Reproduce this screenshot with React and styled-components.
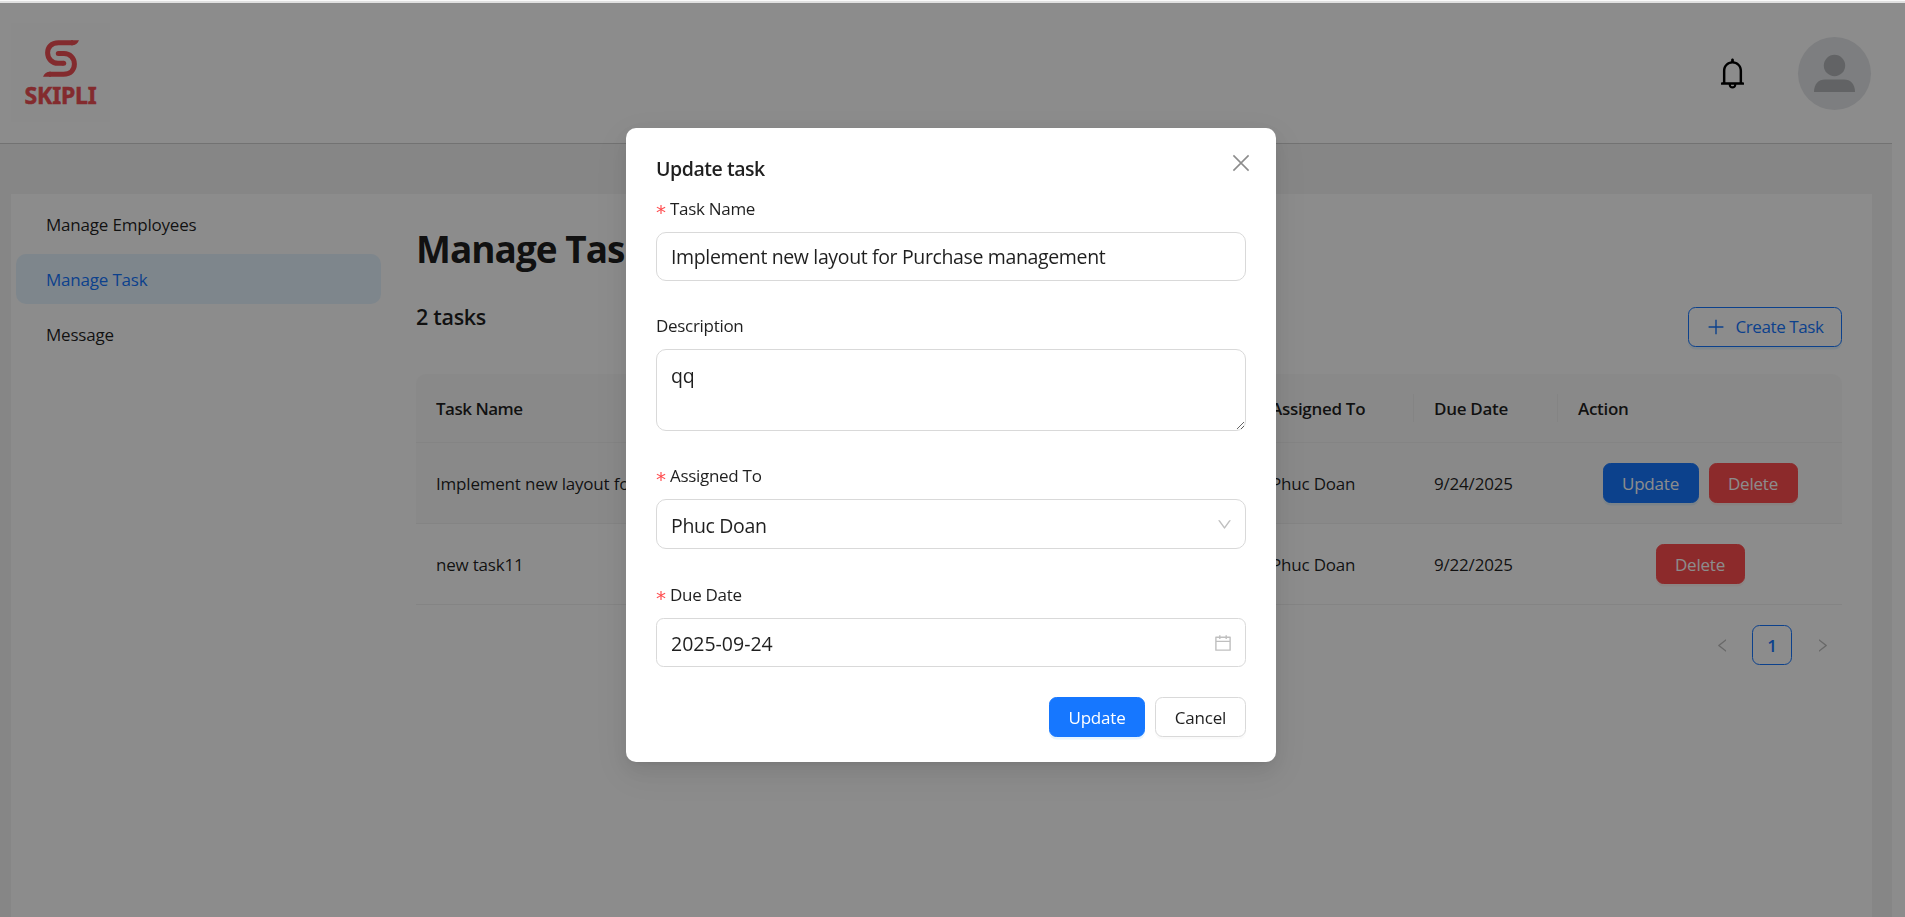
import React from "react";
import styled, { createGlobalStyle } from "styled-components";
import {
  AiOutlineBell,
  AiOutlineCalendar,
  AiOutlineDown,
  AiOutlineLeft,
  AiOutlineRight,
} from "react-icons/ai";

const GlobalStyle = createGlobalStyle`
  * { box-sizing: border-box; }
  html, body { margin: 0; height: 917px; overflow: hidden; }
  body {
    background: #fff;
    color: rgba(0, 0, 0, 0.88);
    font-family: "Open Sans", "Noto Sans", sans-serif;
    font-size: 17px;
    letter-spacing: -0.2px;
    line-height: 28px;
  }
  button, input, textarea { font: inherit; letter-spacing: inherit; color: inherit; }
`;

const TopEdge = styled.div`
  height: 3px;
  background: #e0e0e0;
  border-top: 1px solid #f9f9f9;
`;

const Page = styled.div`
  width: 1892px;
  height: 914px;
  display: flex;
  flex-direction: column;
`;

const Header = styled.header`
  height: 141px;
  flex: none;
  display: flex;
  align-items: center;
  justify-content: space-between;
  padding: 0 21px 1px 11px;
  border-bottom: 1px solid #d0d0d0;
`;

const LogoBox = styled.div`
  width: 99px;
  height: 99px;
  margin-top: -1px;
  background: #fdfdfd;
  color: #ee4f54;
  display: flex;
  flex-direction: column;
  align-items: center;
  padding-top: 17px;
`;

const LogoText = styled.div`
  font: 700 23px/24px "Noto Sans", sans-serif;
  -webkit-text-stroke: 0.5px currentColor;
  margin-top: 6px;
`;

const HeaderActions = styled.div`
  display: flex;
  align-items: center;
  gap: 48px;
  margin-top: 2px;
  color: #000;
`;

const Avatar = styled.div`
  width: 73px;
  height: 73px;
  border-radius: 50%;
  background: #e4e6e9;
  overflow: hidden;
`;

const Body = styled.div`
  flex: 1;
  background: #f5f5f5;
  padding: 50px 20px 0 11px;
`;

const Card = styled.main`
  height: 100%;
  background: #fff;
  display: flex;
`;

const Sidebar = styled.nav`
  width: 375px;
  padding: 5px;
  display: flex;
  flex-direction: column;
  gap: 5px;
`;

const MenuItem = styled.a`
  height: 50px;
  line-height: 51px;
  padding-left: 30px;
  border-radius: 10px;
  background: ${(p) => (p.$active ? "#e6f4ff" : "transparent")};
  color: ${(p) => (p.$active ? "#1677ff" : "inherit")};
`;

const Content = styled.section`
  flex: 1;
  padding: 29px 30px 0;
`;

const PageTitle = styled.h1`
  margin: 0;
  font-size: 37px;
  line-height: 51px;
  height: 50px;
  font-weight: 700;
  letter-spacing: -1px;
`;

const Toolbar = styled.div`
  display: flex;
  justify-content: space-between;
  align-items: flex-end;
  height: 74px;
  margin-bottom: 27px;
`;

const Count = styled.h3`
  margin: 0;
  align-self: flex-start;
  padding-top: 29px;
  font-size: 21.5px;
  line-height: 30px;
  font-weight: 600;
  letter-spacing: -0.3px;
`;

const variants = {
  primary: "background:#1677ff;color:#fff;border-color:#1677ff;box-shadow:0 2.5px 0 rgba(5,145,255,.1);",
  danger: "background:#ff4d4f;color:#fff;border-color:#ff4d4f;box-shadow:0 2.5px 0 rgba(255,38,5,.06);",
  outline: "background:#fff;color:#1677ff;border-color:#1677ff;box-shadow:0 2.5px 0 rgba(5,145,255,.1);",
  plain: "background:#fff;border-color:#d9d9d9;box-shadow:0 2.5px 0 rgba(0,0,0,.02);",
};

const Button = styled.button`
  width: ${(p) => p.$width}px;
  height: 40px;
  padding: ${(p) => (p.$variant === "outline" ? "0 0 0 2px" : "2px 0 0")};
  display: inline-flex;
  align-items: center;
  justify-content: center;
  gap: 11px;
  border: 1px solid;
  border-radius: 7.5px;
  ${(p) => variants[p.$variant]}
`;

const CreateLabel = styled.span`
  letter-spacing: -0.4px;
`;

const Table = styled.table`
  width: 1426px;
  table-layout: fixed;
  border-collapse: separate;
  border-spacing: 0;
`;

const HeadCell = styled.th`
  height: 69px;
  width: ${(p) => p.$width}px;
  padding: 0;
  text-align: left;
  font-weight: 600;
  letter-spacing: -0.3px;
  background: #fafafa;
  border-bottom: 1px solid #f0f0f0;
  &:first-child { border-top-left-radius: 10px; letter-spacing: -0.5px; }
  &:last-child { border-top-right-radius: 10px; }
`;

const HeadLabel = styled.div`
  height: 28px;
  line-height: 30px;
  padding-left: 20px;
  border-right: ${(p) => (p.$last ? "0" : "1px solid #f0f0f0")};
`;

const Row = styled.tr`
  background: ${(p) => (p.$hover ? "#fafafa" : "#fff")};
`;

const Cell = styled.td`
  height: 81px;
  padding: ${(p) => (p.$flush ? 0 : 2)}px 20px 0;
  border-bottom: 1px solid #f0f0f0;
  white-space: nowrap;
`;

const RowActions = styled.div`
  display: flex;
  justify-content: center;
  gap: 10px;
`;

const Pagination = styled.div`
  display: flex;
  justify-content: flex-end;
  gap: 10px;
  margin-top: 20px;
`;

const PageButton = styled.span`
  width: 40px;
  height: 40px;
  padding-top: ${(p) => (p.$current ? 2 : 1)}px;
  display: flex;
  align-items: center;
  justify-content: center;
  border-radius: 7.5px;
  font-weight: 600;
  border: 1px solid ${(p) => (p.$current ? "#1677ff" : "transparent")};
  color: ${(p) => (p.$current ? "#1677ff" : "rgba(0,0,0,0.25)")};
`;

const Mask = styled.div`
  position: fixed;
  inset: 3px 0 0 0;
  background: rgba(0, 0, 0, 0.45);
  display: flex;
  justify-content: center;
  align-items: flex-start;
  padding: 125px 3px 0 0;
`;

const Modal = styled.div`
  width: 650px;
  height: 634px;
  background: #fff;
  border-radius: 10px;
  padding: 25px 30px;
  box-shadow: 0 7.5px 20px 0 rgba(0, 0, 0, 0.08), 0 4px 7.5px -5px rgba(0, 0, 0, 0.12),
    0 11px 35px 10px rgba(0, 0, 0, 0.05);
`;

const ModalHead = styled.div`
  display: flex;
  justify-content: space-between;
  height: 42px;
`;

const ModalTitle = styled.h2`
  margin: 0;
  font-size: 19.5px;
  line-height: 31px;
  font-weight: 600;
  letter-spacing: -0.45px;
`;

const CloseButton = styled.button`
  width: 20px;
  height: 20px;
  margin-right: -5px;
  padding: 0;
  border: 0;
  background: none;
  color: rgba(0, 0, 0, 0.45);
  display: flex;
`;

const Field = styled.div`
  margin-bottom: ${(p) => p.$gap}px;
`;

const Label = styled.label`
  display: flex;
  gap: 5px;
  height: 28px;
  margin-bottom: 9px;
  align-items: center;
  letter-spacing: -0.3px;
`;

const Required = styled.span`
  width: 9px;
  height: 20px;
  padding-top: 3px;
  color: #ff4d4f;
  font: 20px/20px "DejaVu Sans", sans-serif;
  letter-spacing: 0;
`;

const ControlBox = styled.div`
  height: ${(p) => p.$height}px;
  padding: ${(p) => p.$top || 0}px 12px 0 14px;
  border: 1px solid #d9d9d9;
  border-radius: ${(p) => p.$radius || 10}px;
  display: flex;
  align-items: center;
  justify-content: space-between;
  font-size: 19.5px;
  letter-spacing: ${(p) => p.$spacing || 0}px;
  svg { color: rgba(0, 0, 0, 0.25); flex: none; margin-top: -${(p) => p.$top || 0}px; }
`;

const TextArea = styled.textarea`
  display: block;
  width: 100%;
  height: 82px;
  margin: 0;
  padding: 12px 14px;
  border: 1px solid #d9d9d9;
  border-radius: 10px;
  outline: 0;
  resize: vertical;
  font-size: 19.5px;
  line-height: 28px;
`;

const Footer = styled.div`
  display: flex;
  justify-content: flex-end;
  gap: 10px;
`;

const LogoMark = () => (
  <svg width="36" height="37" viewBox="0 0 36 37" fill="none" stroke="currentColor" strokeWidth="5">
    <path d="M30 2.7H15.5C8.2 2.7 4.6 7.4 4.6 12.8c0 6.2 4.6 10.5 10.4 10.5h5.5" />
    <path d="M6 34.2h14.5c7.3 0 10.9-4.7 10.9-10.1 0-6.2-4.6-10.5-10.4-10.5h-5.5" />
    <path d="M28 .2h8c-1.5 3.2-3.5 5-7 5h-1zM8 36.7H0c1.5-3.2 3.500-5 7-5h1z" fill="currentColor" stroke="none" />
    <circle cx="15.3" cy="13.6" r="2.5" fill="currentColor" stroke="none" />
    <circle cx="20.7" cy="23.3" r="2.5" fill="currentColor" stroke="none" />
  </svg>
);

const PersonIcon = () => (
  <svg width="73" height="73" viewBox="0 0 73 73" fill="#b2b5b8">
    <circle cx="36.5" cy="28.5" r="10.7" />
    <path d="M16 55c0-8 4.500-12.500 11-12.500h19c6.500 0 11 4.500 11 12.500z" />
  </svg>
);

const CloseIcon = () => (
  <svg width="20" height="20" viewBox="0 0 20 20" stroke="currentColor" strokeWidth="1.6">
    <path d="M2.400 2.400l15.200 15.200M17.600 2.400L2.400 17.600" />
  </svg>
);

const PlusIcon = () => (
  <svg width="16" height="16" viewBox="0 0 16 16" stroke="currentColor" strokeWidth="1.4">
    <path d="M8 .8v14.400M.6 8h14.800" />
  </svg>
);

const menu = ["Manage Employees", "Manage Task", "Message"];
const columns = [
  ["Task Name", 400],
  ["Description", 435],
  ["Assigned To", 163],
  ["Due Date", 144],
  ["Action", 284],
];
const tasks = [
  { name: "Implement new layout for Purchase management", description: "qq", due: "9/24/2025", editable: true },
  { name: "new task11", description: "", due: "9/22/2025", editable: false },
];

export default function App() {
  return (
    <>
      <GlobalStyle />
      <TopEdge />
      <Page>
        <Header>
          <LogoBox>
            <LogoMark />
            <LogoText>SKIPLI</LogoText>
          </LogoBox>
          <HeaderActions>
            <AiOutlineBell size={35} />
            <Avatar>
              <PersonIcon />
            </Avatar>
          </HeaderActions>
        </Header>
        <Body>
          <Card>
            <Sidebar>
              {menu.map((item) => (
                <MenuItem key={item} $active={item === "Manage Task"}>
                  {item}
                </MenuItem>
              ))}
            </Sidebar>
            <Content>
              <PageTitle>Manage Task</PageTitle>
              <Toolbar>
                <Count>2 tasks</Count>
                <Button $variant="outline" $width={154}>
                  <PlusIcon />
                  <CreateLabel>Create Task</CreateLabel>
                </Button>
              </Toolbar>
              <Table>
                <thead>
                  <tr>
                    {columns.map(([name, width], i) => (
                      <HeadCell key={name} $width={width}>
                        <HeadLabel $last={i === columns.length - 1}>{name}</HeadLabel>
                      </HeadCell>
                    ))}
                  </tr>
                </thead>
                <tbody>
                  {tasks.map((t) => (
                    <Row key={t.name} $hover={t.editable}>
                      <Cell>{t.name}</Cell>
                      <Cell>{t.description}</Cell>
                      <Cell>Phuc Doan</Cell>
                      <Cell>{t.due}</Cell>
                      <Cell $flush>
                        <RowActions>
                          {t.editable && (
                            <Button $variant="primary" $width={96}>
                              Update
                            </Button>
                          )}
                          <Button $variant="danger" $width={89}>
                            Delete
                          </Button>
                        </RowActions>
                      </Cell>
                    </Row>
                  ))}
                </tbody>
              </Table>
              <Pagination>
                <PageButton>
                  <AiOutlineLeft size={17} />
                </PageButton>
                <PageButton $current>1</PageButton>
                <PageButton>
                  <AiOutlineRight size={17} />
                </PageButton>
              </Pagination>
            </Content>
          </Card>
        </Body>
      </Page>
      <Mask>
        <Modal role="dialog">
          <ModalHead>
            <ModalTitle>Update task</ModalTitle>
            <CloseButton aria-label="Close">
              <CloseIcon />
            </CloseButton>
          </ModalHead>
          <Field $gap={31}>
            <Label>
              <Required>*</Required>Task Name
            </Label>
            <ControlBox $height={49} $spacing={-0.36}>
              Implement new layout for Purchase management
            </ControlBox>
          </Field>
          <Field $gap={31}>
            <Label>Description</Label>
            <TextArea defaultValue="qq" />
          </Field>
          <Field $gap={32}>
            <Label>
              <Required>*</Required>Assigned To
            </Label>
            <ControlBox $height={50} $spacing={-0.35} $top={3}>
              Phuc Doan
              <AiOutlineDown size={17} />
            </ControlBox>
          </Field>
          <Field $gap={30}>
            <Label>
              <Required>*</Required>Due Date
            </Label>
            <ControlBox $height={49} $radius={7.5} $top={2}>
              2025-09-24
              <AiOutlineCalendar size={20} />
            </ControlBox>
          </Field>
          <Footer>
            <Button $variant="primary" $width={96}>
              Update
            </Button>
            <Button $variant="plain" $width={91}>
              Cancel
            </Button>
          </Footer>
        </Modal>
      </Mask>
    </>
  );
}
